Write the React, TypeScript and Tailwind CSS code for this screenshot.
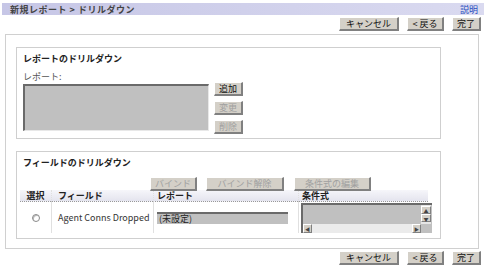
import React from "react";

const font = { fontFamily: '"Noto Sans CJK JP", "Noto Sans", sans-serif' };

function Btn({ children, w, disabled }: { children: React.ReactNode; w: string; disabled?: boolean }) {
  return (
    <div
      className={`${w} h-[14px] flex items-center justify-center bg-[#d4d0c8] border-t border-l border-t-[#ffffff] border-l-[#ffffff] border-r-2 border-b-2 border-r-[#808080] border-b-[#808080] text-[9px] leading-none ${disabled ? "text-[#a0a0a0]" : "text-[#111]"}`}
    >
      {children}
    </div>
  );
}

function NavButtons() {
  return (
    <div className="flex justify-end pr-[3px] gap-[8px]">
      <Btn w="w-[60px]">キャンセル</Btn>
      <Btn w="w-[37px]">&lt; 戻る</Btn>
      <Btn w="w-[29px]">完了</Btn>
    </div>
  );
}

function Arrow({ children, cls }: { children: React.ReactNode; cls: string }) {
  return (
    <div className={`${cls} bg-[#d4d0c8] border-t border-l border-t-white border-l-white border-r border-b border-r-[#808080] border-b-[#808080] text-[5px] leading-none flex items-center justify-center text-[#444]`}>
      {children}
    </div>
  );
}

export default function App() {
  return (
    <div className="w-[484px] h-[268px] bg-white text-[10px] text-[#222] overflow-hidden" style={font}>
      <div className="mt-[3px] ml-[2px] h-[12px] flex items-center justify-between pl-[8px] pr-[6px] bg-gradient-to-r from-[#c6c6e6] to-[#dadaf0]">
        <span className="text-[9px] font-bold text-[#444] leading-none tracking-[0.5px]">新規レポート &gt; ドリルダウン</span>
        <span className="text-[9px] text-[#2a4fbf] leading-none">説明</span>
      </div>
      <div className="mt-[2px]">
        <NavButtons />
      </div>
      <div className="ml-[5px] mt-[3px] w-[474px] h-[215px] border border-[#d0d0d0] pl-[10px] pt-[12px]">
        {/* Section 1 */}
        <div className="w-[425px] h-[92px] border border-[#cfcfcf] pl-[6px] pt-[4px]">
          <div className="text-[9px] font-bold leading-none h-[12px] flex items-center">レポートのドリルダウン</div>
          <div className="mt-[8px] text-[9px] text-[#555] leading-none">レポート:</div>
          <div className="mt-[3px] flex">
            <div className="w-[186px] h-[47px] bg-[#c0c0c0] border-t-2 border-l-2 border-t-[#6a6a6a] border-l-[#6a6a6a] border-r border-b border-r-[#e8e8e8] border-b-[#e8e8e8]" />
            <div className="ml-[5px] -mt-[2px] flex flex-col gap-[5px]">
              <Btn w="w-[29px]">追加</Btn>
              <Btn w="w-[29px]" disabled>変更</Btn>
              <Btn w="w-[29px]" disabled>削除</Btn>
            </div>
          </div>
        </div>
        {/* Section 2 */}
        <div className="mt-[12px] w-[425px] h-[88px] border border-[#cfcfcf] pt-[4px]">
          <div className="pl-[6px] text-[9px] font-bold leading-none h-[12px] flex items-center">フィールドのドリルダウン</div>
          <div className="mt-[9px] flex relative z-10">
            <div className="ml-[133px]"><Btn w="w-[47px]" disabled>バインド</Btn></div>
            <div className="ml-[9px]"><Btn w="w-[78px]" disabled>バインド解除</Btn></div>
            <div className="ml-[10px]"><Btn w="w-[77px]" disabled>条件式の編集</Btn></div>
          </div>
          <div className="grid grid-cols-[31px_102px_145px_130px] ml-[3px] -mt-[1px]">
            <div className="h-[12px] flex items-center justify-center text-[9px] font-bold bg-gradient-to-b from-[#f6f6fa] to-[#e4e4ee] border-b border-dotted border-[#999]">選択</div>
            <div className="h-[12px] flex items-center pl-[6px] text-[9px] font-bold bg-gradient-to-b from-[#f6f6fa] to-[#e4e4ee] border-b border-dotted border-[#999] border-l border-l-[#e0e0e0]">フィールド</div>
            <div className="h-[12px] flex items-center pl-[3px] text-[9px] font-bold bg-gradient-to-b from-[#f6f6fa] to-[#e4e4ee] border-b border-dotted border-[#999] border-l border-l-[#e0e0e0]">レポート</div>
            <div className="h-[12px] flex items-center pl-[3px] text-[9px] font-bold bg-gradient-to-b from-[#f6f6fa] to-[#e4e4ee] border-b border-dotted border-[#999] border-l border-l-[#e0e0e0]">条件式</div>

            <div className="h-[31px] flex items-center justify-center">
              <div className="w-[8px] h-[8px] rounded-full border border-[#8a8a8a] bg-white shadow-[inset_1px_1px_0_#bbb]" />
            </div>
            <div className="h-[31px] flex items-center pl-[6px] text-[9px] text-[#333] border-l border-[#e0e0e0] whitespace-nowrap">Agent Conns Dropped</div>
            <div className="h-[31px] flex items-center pl-[3px] border-l border-[#e0e0e0]">
              <div className="w-[131px] h-[12px] bg-[#c0c0c0] border-t-2 border-t-[#6a6a6a] text-[9px] leading-none flex items-center pl-[2px] text-[#222]">(未設定)</div>
            </div>
            <div className="h-[31px] pl-[2px] border-l border-[#e0e0e0] pt-[1px]">
              <div className="w-[131px] h-[30px] flex flex-col border-t-2 border-l-2 border-[#6a6a6a] bg-[#c0c0c0]">
                <div className="flex flex-1">
                  <div className="flex-1" />
                  <div className="w-[10px] flex flex-col pt-[1px] bg-[#e6e6e6]">
                    <Arrow cls="h-[8px]">▲</Arrow>
                    <Arrow cls="h-[8px]">▼</Arrow>
                  </div>
                  <div className="w-[1px]" />
                </div>
                <div className="h-[9px] flex bg-[#ebebeb]">
                  <Arrow cls="w-[9px]">◀</Arrow>
                  <div className="flex-1" />
                  <Arrow cls="w-[9px]">▶</Arrow>
                  <div className="w-[11px] bg-[#c0c0c0]" />
                </div>
              </div>
            </div>
          </div>
        </div>
      </div>
      <div className="mt-[2px]">
        <NavButtons />
      </div>
    </div>
  );
}
